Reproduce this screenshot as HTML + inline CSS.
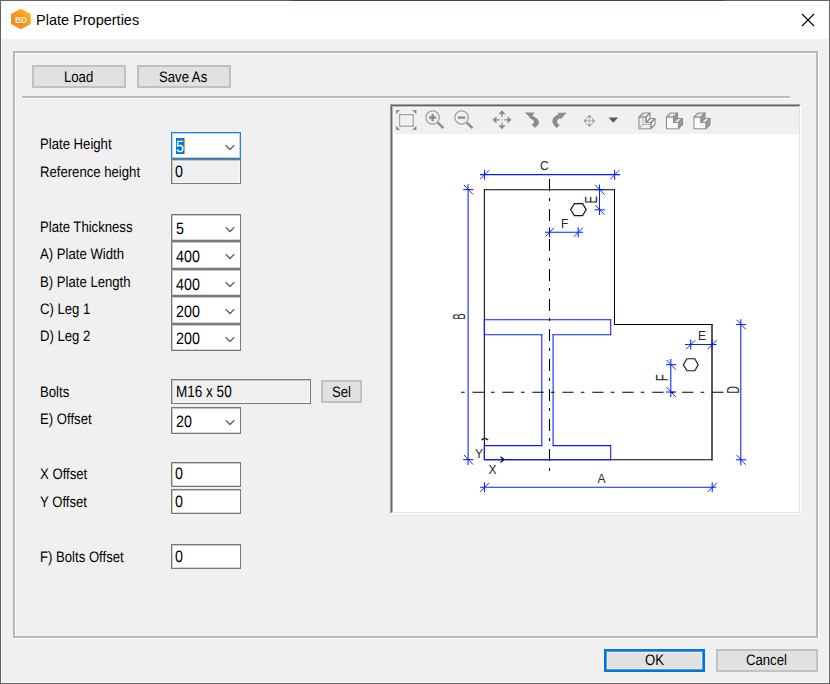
<!DOCTYPE html>
<html><head><meta charset="utf-8">
<style>
*{margin:0;padding:0;box-sizing:border-box}
html,body{width:830px;height:684px;overflow:hidden;background:#f0f0f0}
body{position:relative;font-family:"Liberation Sans",sans-serif;font-size:13.2px;color:#000}
.a{position:absolute}
.t{position:absolute;line-height:20px;white-space:nowrap;font-size:15.2px;text-rendering:geometricPrecision;transform:scaleX(0.865);transform-origin:0 0;margin-top:1px}
.v{font-size:16.5px}
.ttl{position:absolute;line-height:20px;white-space:nowrap;font-size:14.5px}
.btn{position:absolute;background:#e1e1e1;border:2px solid #c1c1c1}
.cb{position:absolute;background:#fff;border:1px solid #7a7a7a;left:171px;width:70px;box-shadow:inset 1px 1px 0 #c8c8c8,inset 0 -1px 0 #d8d8d8}
.tb{position:absolute;background:#fff;border:1px solid #7a7a7a;left:171px;width:70px;box-shadow:inset 1px 1px 0 #c8c8c8,inset 0 -1px 0 #d8d8d8}
.ro{background:#f0f0f0;box-shadow:inset 1px 1px 0 #c8c8c8,inset -1px -1px 0 #f8f8f8}
.chev{position:absolute;left:53px;width:10px;height:7px;overflow:visible}
</style></head><body>
<!-- window frame -->
<div class="a" style="left:0;top:0;width:830px;height:684px;border:1px solid #646464"></div>
<div class="a" style="left:290px;top:0;width:434px;height:1px;background:#33504d"></div>
<!-- title bar -->
<div class="a" style="left:1px;top:1px;width:828px;height:38px;background:#fff"></div>
<div class="a" style="left:1px;top:39px;width:1px;height:644px;background:#fafafa"></div>
<div class="a" style="left:1px;top:682px;width:828px;height:1px;background:#fafafa"></div>
<div class="a" style="left:828px;top:39px;width:1px;height:644px;background:#f6fafa"></div>
<svg class="a" style="left:10px;top:8px" width="22" height="22" viewBox="0 0 22 22">
<defs><linearGradient id="og" x1="0" y1="1" x2="1" y2="0"><stop offset="0" stop-color="#f08220"/><stop offset="0.55" stop-color="#f7961c"/><stop offset="1" stop-color="#fdbf12"/></linearGradient></defs>
<polygon points="10.9,1.6 20,6.4 20,15.6 10.9,20.4 1.8,15.6 1.8,6.4" fill="url(#og)" stroke="url(#og)" stroke-width="1.4" stroke-linejoin="round"/>
<text x="11" y="14.6" text-anchor="middle" font-family="Liberation Sans" font-size="8.6" font-weight="bold" fill="#f8eadb" letter-spacing="-0.3">BD</text>
</svg>
<div class="ttl" style="left:36px;top:10px">Plate Properties</div>
<svg class="a" style="left:801px;top:13px" width="14" height="14" viewBox="0 0 14 14"><path d="M1 1L13 13M13 1L1 13" stroke="#000" stroke-width="1.1"/></svg>

<!-- group box etched -->
<div class="a" style="left:13px;top:51px;width:805px;height:587px;border:2px solid #b9b9b9;border-right-width:1px;border-bottom-width:1px"></div>
<div class="a" style="left:15px;top:53px;width:801px;height:584px;border-top:1px solid #fff;border-left:1px solid #fff"></div>
<div class="a" style="left:816px;top:52px;width:1px;height:586px;background:#b9b9b9"></div>
<div class="a" style="left:14px;top:636px;width:803px;height:1px;background:#b9b9b9"></div>
<div class="a" style="left:818px;top:51px;width:1px;height:588px;background:#fff"></div>
<div class="a" style="left:13px;top:638px;width:806px;height:1px;background:#fff"></div>

<!-- Load / Save As -->
<div class="btn" style="left:32px;top:65px;width:94px;height:23px"></div>
<div class="t" style="left:64px;top:67px">Load</div>
<div class="btn" style="left:137px;top:65px;width:94px;height:23px"></div>
<div class="t" style="left:159px;top:67px">Save As</div>
<!-- separator -->
<div class="a" style="left:22px;top:96px;width:768px;height:2px;background:#bcbcbc"></div>
<div class="a" style="left:22px;top:98px;width:769px;height:1px;background:#fff"></div>

<!-- labels -->
<div class="t" style="left:40px;top:134px">Plate Height</div>
<div class="t" style="left:40px;top:162px">Reference height</div>
<div class="t" style="left:40px;top:217px">Plate Thickness</div>
<div class="t" style="left:40px;top:244px">A) Plate Width</div>
<div class="t" style="left:40px;top:272px">B) Plate Length</div>
<div class="t" style="left:40px;top:299px">C) Leg 1</div>
<div class="t" style="left:40px;top:326px">D) Leg 2</div>
<div class="t" style="left:40px;top:382px">Bolts</div>
<div class="t" style="left:40px;top:409px">E) Offset</div>
<div class="t" style="left:40px;top:464px">X Offset</div>
<div class="t" style="left:40px;top:492px">Y Offset</div>
<div class="t" style="left:40px;top:547px">F) Bolts Offset</div>

<!-- controls -->
<div class="cb" style="top:132px;height:27px;border-color:#1a82d9;box-shadow:inset 0 0 0 1px rgba(0,120,215,0.3)"><div class="a" style="left:4px;top:5px;width:8px;height:16px;background:#0078d7"></div><div class="a" style="left:12px;top:5px;width:1px;height:16px;background:#f39a4a"></div><div class="t v" style="left:4px;top:3px;color:#fff">5</div><svg class="chev" style="top:11px" viewBox="0 0 10 7"><path d="M0.6 1.1L5 5.5L9.4 1.1" fill="none" stroke="#585858" stroke-width="1.25"/></svg></div>
<div class="tb ro" style="top:159px;height:25px"><div class="t v" style="left:3px;top:1px">0</div></div>

<div class="cb" style="top:214px;height:27px"><div class="t v" style="left:4px;top:3px">5</div><svg class="chev" style="top:11px" viewBox="0 0 10 7"><path d="M0.6 1.1L5 5.5L9.4 1.1" fill="none" stroke="#585858" stroke-width="1.25"/></svg></div>
<div class="cb" style="top:241px;height:28px"><div class="t v" style="left:4px;top:4px">400</div><svg class="chev" style="top:11px" viewBox="0 0 10 7"><path d="M0.6 1.1L5 5.5L9.4 1.1" fill="none" stroke="#585858" stroke-width="1.25"/></svg></div>
<div class="cb" style="top:269px;height:27px"><div class="t v" style="left:4px;top:4px">400</div><svg class="chev" style="top:11px" viewBox="0 0 10 7"><path d="M0.6 1.1L5 5.5L9.4 1.1" fill="none" stroke="#585858" stroke-width="1.25"/></svg></div>
<div class="cb" style="top:296px;height:28px"><div class="t v" style="left:4px;top:4px">200</div><svg class="chev" style="top:11px" viewBox="0 0 10 7"><path d="M0.6 1.1L5 5.5L9.4 1.1" fill="none" stroke="#585858" stroke-width="1.25"/></svg></div>
<div class="cb" style="top:324px;height:27px"><div class="t v" style="left:4px;top:3px">200</div><svg class="chev" style="top:11px" viewBox="0 0 10 7"><path d="M0.6 1.1L5 5.5L9.4 1.1" fill="none" stroke="#585858" stroke-width="1.25"/></svg></div>

<div class="tb ro" style="top:379px;height:25px;width:140px"><div class="t v" style="left:4px;top:1px;transform:scaleX(0.82)">M16 x 50</div></div>
<div class="btn" style="left:321px;top:380px;width:41px;height:23px"></div>
<div class="t" style="left:332px;top:382px">Sel</div>
<div class="cb" style="top:407px;height:27px"><div class="t v" style="left:4px;top:3px">20</div><svg class="chev" style="top:11px" viewBox="0 0 10 7"><path d="M0.6 1.1L5 5.5L9.4 1.1" fill="none" stroke="#585858" stroke-width="1.25"/></svg></div>

<div class="tb" style="top:462px;height:25px"><div class="t v" style="left:3px;top:0px">0</div></div>
<div class="tb" style="top:489px;height:25px"><div class="t v" style="left:3px;top:1px">0</div></div>
<div class="tb" style="top:544px;height:25px"><div class="t v" style="left:3px;top:1px">0</div></div>

<!-- OK / Cancel -->
<div class="a" style="left:604px;top:649px;width:101px;height:23px;background:#e1e1e1;border:2px solid #0078d7;box-shadow:inset 0 0 0 1px #4f98df,inset 0 0 0 2px #f2ece6"></div>
<div class="t" style="left:645px;top:650px">OK</div>
<div class="btn" style="left:716px;top:649px;width:102px;height:23px"></div>
<div class="t" style="left:746px;top:650px">Cancel</div>

<!-- drawing panel -->
<div class="a" style="left:390px;top:104px;width:411px;height:410px;background:#fff;border-top:1px solid #a0a0a0;border-left:1px solid #a0a0a0;border-right:1px solid #fff;border-bottom:1px solid #fff"></div>
<div class="a" style="left:391px;top:105px;width:409px;height:408px;border-top:1px solid #696969;border-left:1px solid #696969;border-right:1px solid #e3e3e3;border-bottom:1px solid #e3e3e3"></div>
<div class="a" style="left:392px;top:106px;width:407px;height:1px;background:#b4b4b4"></div>
<div class="a" style="left:392px;top:106px;width:1px;height:406px;background:#b4b4b4"></div>
<div class="a" style="left:393px;top:107px;width:406px;height:27px;background:#f0f0f0;border-top:1px solid #f8f8f8;border-left:1px solid #f8f8f8"></div>
<svg class="a" style="left:0;top:0" width="830" height="684" viewBox="0 0 830 684">
<rect x="399.7" y="114.7" width="13.4" height="11.4" fill="none" stroke="#a4a4a4" stroke-width="1.4"/>
<rect x="401" y="116" width="10.8" height="8.8" fill="none" stroke="#fafafa" stroke-width="0.8"/>
<path d="M396 110h4.2l-4.2 4.2z M416.4 110h-4.2l4.2 4.2z M396 130h4.2l-4.2-4.2z M416.4 130h-4.2l4.2-4.2z" fill="#8e8e8e"/>
<circle cx="432.6" cy="117.5" r="6.7" fill="none" stroke="#a6a6a6" stroke-width="1.35"/>
<path d="M429.0 117.6h7.2" stroke="#8a8a8a" stroke-width="2.3"/>
<path d="M432.6 114v7.2" stroke="#8a8a8a" stroke-width="2.3"/>
<path d="M437.8 122.6l5.6 5.6" stroke="#8e8e8e" stroke-width="2.5"/>
<circle cx="461.6" cy="117.5" r="6.7" fill="none" stroke="#a6a6a6" stroke-width="1.35"/>
<path d="M458.0 117.6h7.2" stroke="#8a8a8a" stroke-width="2.3"/>
<path d="M466.8 122.6l5.6 5.6" stroke="#8e8e8e" stroke-width="2.5"/>
<g fill="#8c8c8c"><path d="M502 110.3l-3.6 4h7.2z M502 129.3l-3.6-4h7.2z M492.5 119.8l4-3.6v7.2z M511.5 119.8l-4-3.6v7.2z"/>
<path d="M501.4 113.5h1.2v3.6h-1.2z M501.4 122.5h1.2v3.6h-1.2z M496 119.2h3.6v1.2h-3.6z M504.4 119.2h3.6v1.2h-3.6z"/><rect x="501.4" y="119.2" width="1.2" height="1.2" fill="#b0b0b0"/></g>
<g fill="#8c8c8c"><path d="M524.8 112.6L534.6 112.6L531 118.2Z"/>
<path d="M529 115 C534.5 116 538.9 119 538.9 122.3 C538.9 124.5 537.2 126.5 534.7 127.8 L531.6 124.6 C533.1 123.8 534 123 534 122 C534 120.6 532.4 119.2 529.8 118.2Z"/>
<path d="M557.8 112.7L566.6 112.7L560.6 119.3Z"/>
<path d="M559 114.3 C554.6 115.8 552.3 118.5 552.3 121 C552.3 123.5 554 125.8 556.6 128 L559.6 125 C557.9 123.8 557.1 122.6 557.1 121.5 C557.1 120 558.4 118.7 560.8 117.8Z"/></g>
<path d="M589.35 115L594.8 120.8L589.35 126.6L583.9 120.8Z" fill="none" stroke="#b2b2b2" stroke-width="1"/>
<path d="M589.35 114.9l-2 2.4h4z M589.35 126.7l-2-2.4h4z M583.8 120.8l2.4-2v4z M594.9 120.8l-2.4-2v4z" fill="#9a9a9a"/>
<path d="M589.35 117v7.6 M585.6 120.8h7.5" stroke="#a8a8a8" stroke-width="0.9"/>
<path d="M608.5 117.6h9.6l-4.8 5.2z" fill="#5a5a5a"/>
<g fill="none" stroke="#8e8e8e" stroke-width="1.1" stroke-linejoin="round"><polygon points="639,117 646,117 646,122.5 651,122.5 651,128.7 639,128.7"/><polygon points="639,117 643,113 650,113 646,117"/><polygon points="646,117 650,113 650,118.5 646,122.5"/><polygon points="646,122.5 650,118.5 655,118.5 651,122.5"/><polygon points="651,122.5 655,118.5 655,124.5 651,128.7"/><path d="M643 113v11.5h8M643 124.5l-4 4.2" stroke="#b4b4b4"/></g>
<g stroke="#8e8e8e" stroke-width="1.1" stroke-linejoin="round"><polygon points="666.5,117 673.5,117 673.5,122.5 678.5,122.5 678.5,128.7 666.5,128.7" fill="#fbfbfb"/><polygon points="666.5,117 670.5,113 677.5,113 673.5,117" fill="#e6e6e6"/><polygon points="673.5,117 677.5,113 677.5,118.5 673.5,122.5" fill="#9c9c9c"/><polygon points="673.5,122.5 677.5,118.5 682.5,118.5 678.5,122.5" fill="#e6e6e6"/><polygon points="678.5,122.5 682.5,118.5 682.5,124.5 678.5,128.7" fill="#9c9c9c"/></g>
<g stroke="#8e8e8e" stroke-width="1.1" stroke-linejoin="round"><polygon points="694,117 701,117 701,122.5 706,122.5 706,128.7 694,128.7" fill="#fbfbfb"/><polygon points="694,117 698,113 705,113 701,117" fill="#e6e6e6"/><polygon points="701,117 705,113 705,118.5 701,122.5" fill="#9c9c9c"/><polygon points="701,122.5 705,118.5 710,118.5 706,122.5" fill="#e6e6e6"/><polygon points="706,122.5 710,118.5 710,124.5 706,128.7" fill="#9c9c9c"/></g>
<line x1="484" y1="189.65" x2="615" y2="189.65" stroke="#000" stroke-width="1.05"/>
<line x1="484.35" y1="189" x2="484.35" y2="460" stroke="#000" stroke-width="1.05"/>
<line x1="614.5" y1="189" x2="614.5" y2="325" stroke="#000" stroke-width="1.05"/>
<line x1="614" y1="324.5" x2="712.6" y2="324.5" stroke="#000" stroke-width="1.05"/>
<line x1="712.0" y1="324" x2="712.0" y2="460.2" stroke="#000" stroke-width="1.3"/>
<line x1="484" y1="459.7" x2="712.6" y2="459.7" stroke="#000" stroke-width="1.05"/>
<line x1="484" y1="319.7" x2="611.2" y2="319.7" stroke="#0a1eff" stroke-width="1.05"/>
<line x1="610.7" y1="319.2" x2="610.7" y2="335.2" stroke="#0a1eff" stroke-width="1.05"/>
<line x1="552.6" y1="334.7" x2="611.2" y2="334.7" stroke="#0a1eff" stroke-width="1.05"/>
<line x1="484" y1="334.7" x2="542.3" y2="334.7" stroke="#0a1eff" stroke-width="1.05"/>
<line x1="484.35" y1="319.2" x2="484.35" y2="335.2" stroke="#0a1eff" stroke-width="1.05"/>
<line x1="541.8" y1="334.2" x2="541.8" y2="446.1" stroke="#0a1eff" stroke-width="1.05"/>
<line x1="553.1" y1="334.2" x2="553.1" y2="446.1" stroke="#0a1eff" stroke-width="1.05"/>
<line x1="484" y1="445.6" x2="542.3" y2="445.6" stroke="#0a1eff" stroke-width="1.05"/>
<line x1="552.6" y1="445.6" x2="611.2" y2="445.6" stroke="#0a1eff" stroke-width="1.05"/>
<line x1="610.7" y1="445.1" x2="610.7" y2="460.1" stroke="#0a1eff" stroke-width="1.05"/>
<line x1="484" y1="459.6" x2="611.2" y2="459.6" stroke="#0a1eff" stroke-width="1.05"/>
<line x1="484.35" y1="445.1" x2="484.35" y2="460.1" stroke="#0a1eff" stroke-width="1.05"/>
<line x1="480" y1="174.63" x2="620" y2="174.63" stroke="#0a1eff" stroke-width="1.05"/>
<line x1="484.5" y1="169.73" x2="484.5" y2="179.73" stroke="#0a1eff" stroke-width="1.05"/>
<line x1="480.1" y1="179.23" x2="489.1" y2="170.23" stroke="#0a1eff" stroke-width="0.95"/>
<line x1="614.6" y1="169.73" x2="614.6" y2="179.73" stroke="#0a1eff" stroke-width="1.05"/>
<line x1="610.2" y1="179.23" x2="619.2" y2="170.23" stroke="#0a1eff" stroke-width="0.95"/>
<line x1="468.1" y1="184.2" x2="468.1" y2="465" stroke="#0a1eff" stroke-width="1.05"/>
<line x1="463.20000000000005" y1="189.6" x2="473.40000000000003" y2="189.6" stroke="#0a1eff" stroke-width="1.05"/>
<line x1="463.90000000000003" y1="184.9" x2="473.1" y2="194.5" stroke="#0a1eff" stroke-width="0.95"/>
<line x1="463.20000000000005" y1="459.6" x2="473.40000000000003" y2="459.6" stroke="#0a1eff" stroke-width="1.05"/>
<line x1="463.90000000000003" y1="454.90000000000003" x2="473.1" y2="464.5" stroke="#0a1eff" stroke-width="0.95"/>
<line x1="480" y1="487.2" x2="716.3" y2="487.2" stroke="#0a1eff" stroke-width="1.05"/>
<line x1="484.5" y1="482.3" x2="484.5" y2="492.3" stroke="#0a1eff" stroke-width="1.05"/>
<line x1="480.1" y1="491.8" x2="489.1" y2="482.8" stroke="#0a1eff" stroke-width="0.95"/>
<line x1="712.2" y1="482.3" x2="712.2" y2="492.3" stroke="#0a1eff" stroke-width="1.05"/>
<line x1="707.8000000000001" y1="491.8" x2="716.8000000000001" y2="482.8" stroke="#0a1eff" stroke-width="0.95"/>
<line x1="740.8" y1="319.2" x2="740.8" y2="465.2" stroke="#0a1eff" stroke-width="1.05"/>
<line x1="735.9" y1="324.5" x2="746.0999999999999" y2="324.5" stroke="#0a1eff" stroke-width="1.05"/>
<line x1="736.5999999999999" y1="319.8" x2="745.8" y2="329.4" stroke="#0a1eff" stroke-width="0.95"/>
<line x1="735.9" y1="459.8" x2="746.0999999999999" y2="459.8" stroke="#0a1eff" stroke-width="1.05"/>
<line x1="736.5999999999999" y1="455.1" x2="745.8" y2="464.7" stroke="#0a1eff" stroke-width="0.95"/>
<line x1="599.5" y1="184.5" x2="599.5" y2="215" stroke="#0a1eff" stroke-width="1.05"/>
<line x1="594.6" y1="189.6" x2="604.8" y2="189.6" stroke="#0a1eff" stroke-width="1.05"/>
<line x1="595.3" y1="184.9" x2="604.5" y2="194.5" stroke="#0a1eff" stroke-width="0.95"/>
<line x1="594.6" y1="209.8" x2="604.8" y2="209.8" stroke="#0a1eff" stroke-width="1.05"/>
<line x1="595.3" y1="205.10000000000002" x2="604.5" y2="214.70000000000002" stroke="#0a1eff" stroke-width="0.95"/>
<line x1="545" y1="232.2" x2="583" y2="232.2" stroke="#0a1eff" stroke-width="1.05"/>
<line x1="549.5" y1="227.29999999999998" x2="549.5" y2="237.29999999999998" stroke="#0a1eff" stroke-width="1.05"/>
<line x1="545.1" y1="236.79999999999998" x2="554.1" y2="227.79999999999998" stroke="#0a1eff" stroke-width="0.95"/>
<line x1="578.2" y1="227.29999999999998" x2="578.2" y2="237.29999999999998" stroke="#0a1eff" stroke-width="1.05"/>
<line x1="573.8000000000001" y1="236.79999999999998" x2="582.8000000000001" y2="227.79999999999998" stroke="#0a1eff" stroke-width="0.95"/>
<line x1="685" y1="344.5" x2="716.5" y2="344.5" stroke="#0a1eff" stroke-width="1.05"/>
<line x1="690.7" y1="339.6" x2="690.7" y2="349.6" stroke="#0a1eff" stroke-width="1.05"/>
<line x1="686.3000000000001" y1="349.1" x2="695.3000000000001" y2="340.1" stroke="#0a1eff" stroke-width="0.95"/>
<line x1="712.1" y1="339.6" x2="712.1" y2="349.6" stroke="#0a1eff" stroke-width="1.05"/>
<line x1="707.7" y1="349.1" x2="716.7" y2="340.1" stroke="#0a1eff" stroke-width="0.95"/>
<line x1="670.8" y1="359" x2="670.8" y2="397" stroke="#0a1eff" stroke-width="1.05"/>
<line x1="665.9" y1="364.7" x2="676.0999999999999" y2="364.7" stroke="#0a1eff" stroke-width="1.05"/>
<line x1="666.5999999999999" y1="360.0" x2="675.8" y2="369.59999999999997" stroke="#0a1eff" stroke-width="0.95"/>
<line x1="665.9" y1="392.0" x2="676.0999999999999" y2="392.0" stroke="#0a1eff" stroke-width="1.05"/>
<line x1="666.5999999999999" y1="387.3" x2="675.8" y2="396.9" stroke="#0a1eff" stroke-width="0.95"/>
<line x1="549.5" y1="179" x2="549.5" y2="471" stroke="#000" stroke-width="1.05" stroke-dasharray="12 7 3 8"/>
<line x1="461.05" y1="392.2" x2="723.6" y2="392.2" stroke="#000" stroke-width="1.15" stroke-dasharray="3.6 7.85 11.3 7.2"/>
<polygon points="570.6,209.6 574.4,203.6 582.6,203.6 586.2,209.6 582.6,215.6 574.4,215.6" fill="none" stroke="#111" stroke-width="1.15"/>
<polygon points="683.4,364.7 687.0,358.7 694.8,358.7 698.2,364.7 694.8,370.7 687.0,370.7" fill="none" stroke="#111" stroke-width="1.15"/>
<path d="M481.5 440.1 Q484.4 436.7 488.2 440.1" fill="none" stroke="#000" stroke-width="1.1"/>
<path d="M500.5 456.8 L503.8 459.6 L500.5 462.4" fill="none" stroke="#000" stroke-width="1.3"/>
<g font-family="Liberation Sans" font-size="12" fill="#2a2a2a"><text x="540" y="170">C</text><text x="561" y="228">F</text><text x="698" y="340">E</text><text x="597.5" y="483">A</text><text x="488.5" y="474">X</text><text x="475" y="458">Y</text></g>
<g font-family="Liberation Sans" font-size="16.5" fill="#2a2a2a"><text transform="translate(465.4,319.5) rotate(-90) scale(0.56,1)" x="0" y="0">B</text><text transform="translate(597,203.6) rotate(-90) scale(0.68,1)" x="0" y="0">E</text><text transform="translate(668,381.2) rotate(-90) scale(0.7,1)" x="0" y="0">F</text><text transform="translate(739,393.6) rotate(-90) scale(0.62,1)" x="0" y="0">D</text></g>
</svg>
</body></html>
